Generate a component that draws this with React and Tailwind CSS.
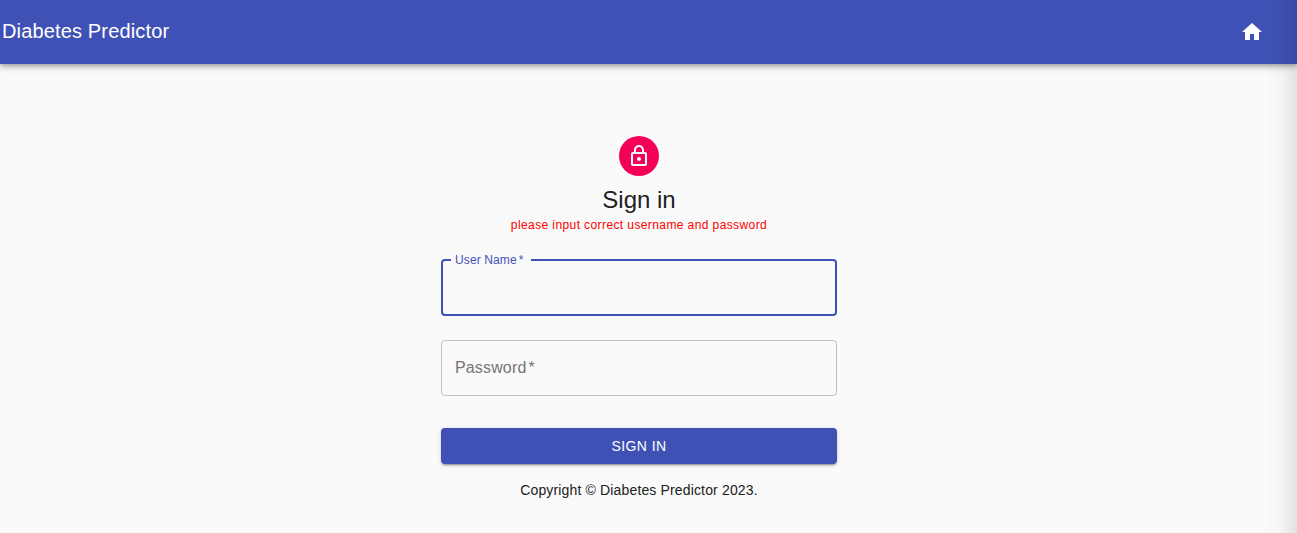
import React from "react";

function HomeIcon() {
  return (
    <svg viewBox="0 0 24 24" className="size-6 fill-white" aria-hidden="true">
      <path d="M10 20v-6h4v6h5v-8h3L12 3 2 12h3v8z" />
    </svg>
  );
}

function LockOutlinedIcon() {
  return (
    <svg viewBox="0 0 24 24" className="size-6 fill-[#fafafa]" aria-hidden="true">
      <path d="M12 17c1.1 0 2-.9 2-2s-.9-2-2-2-2 .9-2 2 .9 2 2 2zm6-9h-1V6c0-2.76-2.24-5-5-5S7 3.24 7 6v2H6c-1.1 0-2 .9-2 2v10c0 1.1.9 2 2 2h12c1.1 0 2-.9 2-2V10c0-1.1-.9-2-2-2zM8.9 6c0-1.71 1.39-3.1 3.1-3.1s3.1 1.39 3.1 3.1v2H8.9V6zM18 20H6V10h12v10z" />
    </svg>
  );
}

function Header() {
  return (
    <header className="flex h-16 items-center justify-between bg-[#3f51b5] pr-[33px] pl-[2px] text-white shadow-[0_2px_4px_-1px_rgba(0,0,0,0.2),0_4px_5px_0_rgba(0,0,0,0.14),0_1px_10px_0_rgba(0,0,0,0.12)]">
      <h6 className="pb-[2px] text-[20px] leading-8 font-normal tracking-[0.15px] whitespace-nowrap">Diabetes Predictor</h6>
      <a href="#" aria-label="Home">
        <HomeIcon />
      </a>
    </header>
  );
}

export default function App() {
  return (
    <div className="relative h-[533px] overflow-hidden bg-[#fafafa] font-['Liberation_Sans',Arial,sans-serif] text-[#212121]">
      <Header />
      <main className="mr-[19px] flex justify-center pt-[72px]">
        <div className="flex w-[396px] flex-col items-center">
          <div className="mb-2 flex size-10 items-center justify-center rounded-full bg-[#f50057]">
            <LockOutlinedIcon />
          </div>
          <h1 className="text-[24px] leading-8 font-normal">Sign in</h1>
          <p className="text-[12px] leading-[19px] tracking-[0.4px] whitespace-nowrap text-[#ff0000]">
            please input correct username and password
          </p>
          <form className="mt-6 flex w-full flex-col" onSubmit={(e) => e.preventDefault()}>
            <div className="relative h-[57px] rounded border-2 border-[#3f51b5]">
              <input id="username" className="size-full bg-transparent px-3 text-[16px] outline-none" />
              <label
                htmlFor="username"
                className="absolute -top-[9px] left-2 w-20 bg-[#fafafa] pl-1 text-[12px] leading-4 tracking-[0.11px] whitespace-nowrap text-[#3f51b5]"
              >
                User Name<span className="ml-[2px]">*</span>
              </label>
            </div>
            <div className="relative mt-6 h-14 rounded border border-[#c0c0c0]">
              <input id="password" type="password" className="size-full bg-transparent px-3 text-[16px] outline-none" />
              <label
                htmlFor="password"
                className="pointer-events-none absolute top-[15px] left-[13px] text-[16px] leading-6 tracking-[0.15px] whitespace-nowrap text-[#757575]"
              >
                Password<span className="ml-[2px]">*</span>
              </label>
            </div>
            <button
              type="submit"
              className="mt-8 h-9 rounded bg-[#3f51b5] text-[14px] leading-6 tracking-[0.4px] text-white shadow-[0_3px_1px_-2px_rgba(0,0,0,0.2),0_2px_2px_0_rgba(0,0,0,0.14),0_1px_5px_0_rgba(0,0,0,0.12)]"
            >
              SIGN IN
            </button>
          </form>
          <p className="mt-4 text-[14px] leading-5 tracking-[0.15px] whitespace-nowrap">
            Copyright © Diabetes Predictor 2023.
          </p>
        </div>
      </main>
      <div className="pointer-events-none absolute inset-y-0 right-0 w-8 bg-[linear-gradient(to_right,rgba(0,0,0,0),rgba(0,0,0,0.02)_45%,rgba(0,0,0,0.06)_75%,rgba(0,0,0,0.1))]" />
    </div>
  );
}
